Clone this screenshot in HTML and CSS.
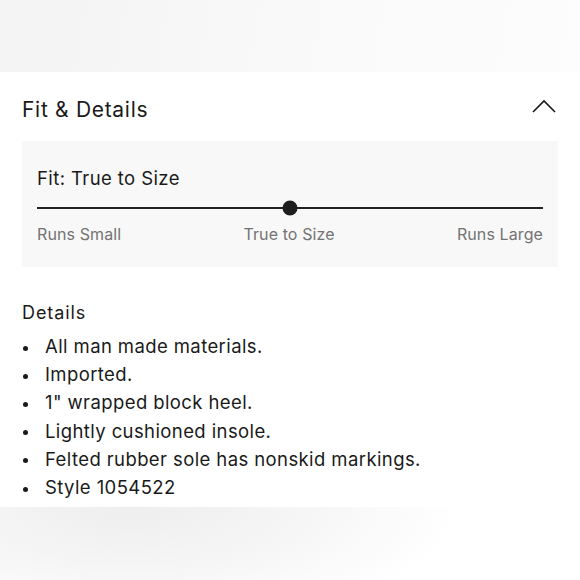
FILE: index.html
```html
<!DOCTYPE html>
<html>
<head>
<meta charset="utf-8">
<link rel="stylesheet" href="styles.css">
</head>
<body>
<div class="band-top"></div>
<section class="panel">
  <div class="panel-head">
    <h2 class="panel-title">Fit &amp; Details</h2>
    <svg class="chevron" width="24" height="14" viewBox="0 0 24 14"><path d="M1 13 L12 2 L23 13" fill="none" stroke="#1a1a1a" stroke-width="1.6"/></svg>
  </div>
  <div class="fit-box">
    <div class="fit-title">Fit: True to Size</div>
    <div class="fit-track"><span class="fit-dot"></span></div>
    <div class="fit-labels">
      <span>Runs Small</span>
      <span>True to Size</span>
      <span>Runs Large</span>
    </div>
  </div>
  <div class="details">
    <div class="details-title">Details</div>
    <ul class="details-list">
      <li>All man made materials.</li>
      <li>Imported.</li>
      <li>1" wrapped block heel.</li>
      <li>Lightly cushioned insole.</li>
      <li>Felted rubber sole has nonskid markings.</li>
      <li>Style 1054522</li>
    </ul>
  </div>
</section>
<div class="band-bottom"></div>
</body>
</html>
```
FILE: styles.css
```css
* { box-sizing: border-box; }
html, body { margin: 0; padding: 0; background: #fff; }
body {
  font-family: "Inter", "Open Sans", sans-serif;
  color: #1a1a1a;
  width: 580px;
  height: 580px;
  overflow: hidden;
}
.band-top {
  height: 72px;
  background: linear-gradient(100deg, #f3f3f3 0%, #f8f8f8 40%, #fdfdfd 100%);
}
.panel { padding: 0 22px 0 22px; }
.panel-head {
  height: 69px;
  display: flex;
  align-items: center;
  justify-content: space-between;
}
.panel-title {
  margin: 0;
  font-size: 21px;
  line-height: 28px;
  font-weight: 400;
  letter-spacing: 0.7px;
  padding-top: 6px;
}
.chevron { margin-right: 2px; margin-top: -1px; }
.fit-box {
  background: #f8f8f8;
  height: 126px;
  padding: 25px 15px 0 15px;
}
.fit-title { font-size: 18.5px; line-height: 24px; letter-spacing: 0.4px; }
.fit-track {
  position: relative;
  height: 2px;
  background: #222;
  margin-top: 17px;
}
.fit-dot {
  position: absolute;
  left: 50%;
  top: 50%;
  width: 15px;
  height: 15px;
  border-radius: 50%;
  background: #1e1e1e;
  transform: translate(-50%, -50%);
}
.fit-labels {
  display: flex;
  justify-content: space-between;
  margin-top: 15px;
  font-size: 16px;
  line-height: 20px;
  letter-spacing: 0.1px;
  color: #737373;
}
.details { padding-top: 34px; }
.details-title { font-size: 18px; line-height: 24px; letter-spacing: 0.9px; }
.details-list {
  list-style: none;
  margin: 7px 0 0 0;
  padding: 0;
}
.details-list li {
  position: relative;
  padding-left: 23px;
  font-size: 18.5px;
  line-height: 28.2px;
  letter-spacing: 0.4px;
}
.details-list li::before {
  content: "";
  position: absolute;
  left: 1px;
  top: 13.5px;
  width: 5px;
  height: 5px;
  border-radius: 50%;
  background: #1a1a1a;
}
.band-bottom {
  position: absolute;
  left: 0;
  top: 507px;
  width: 580px;
  height: 73px;
  background: radial-gradient(ellipse 330px 120px at 130px 0px, #eeeeee 0%, #f3f3f3 35%, #f8f8f8 65%, #fcfcfc 85%, #ffffff 100%);
}
```
